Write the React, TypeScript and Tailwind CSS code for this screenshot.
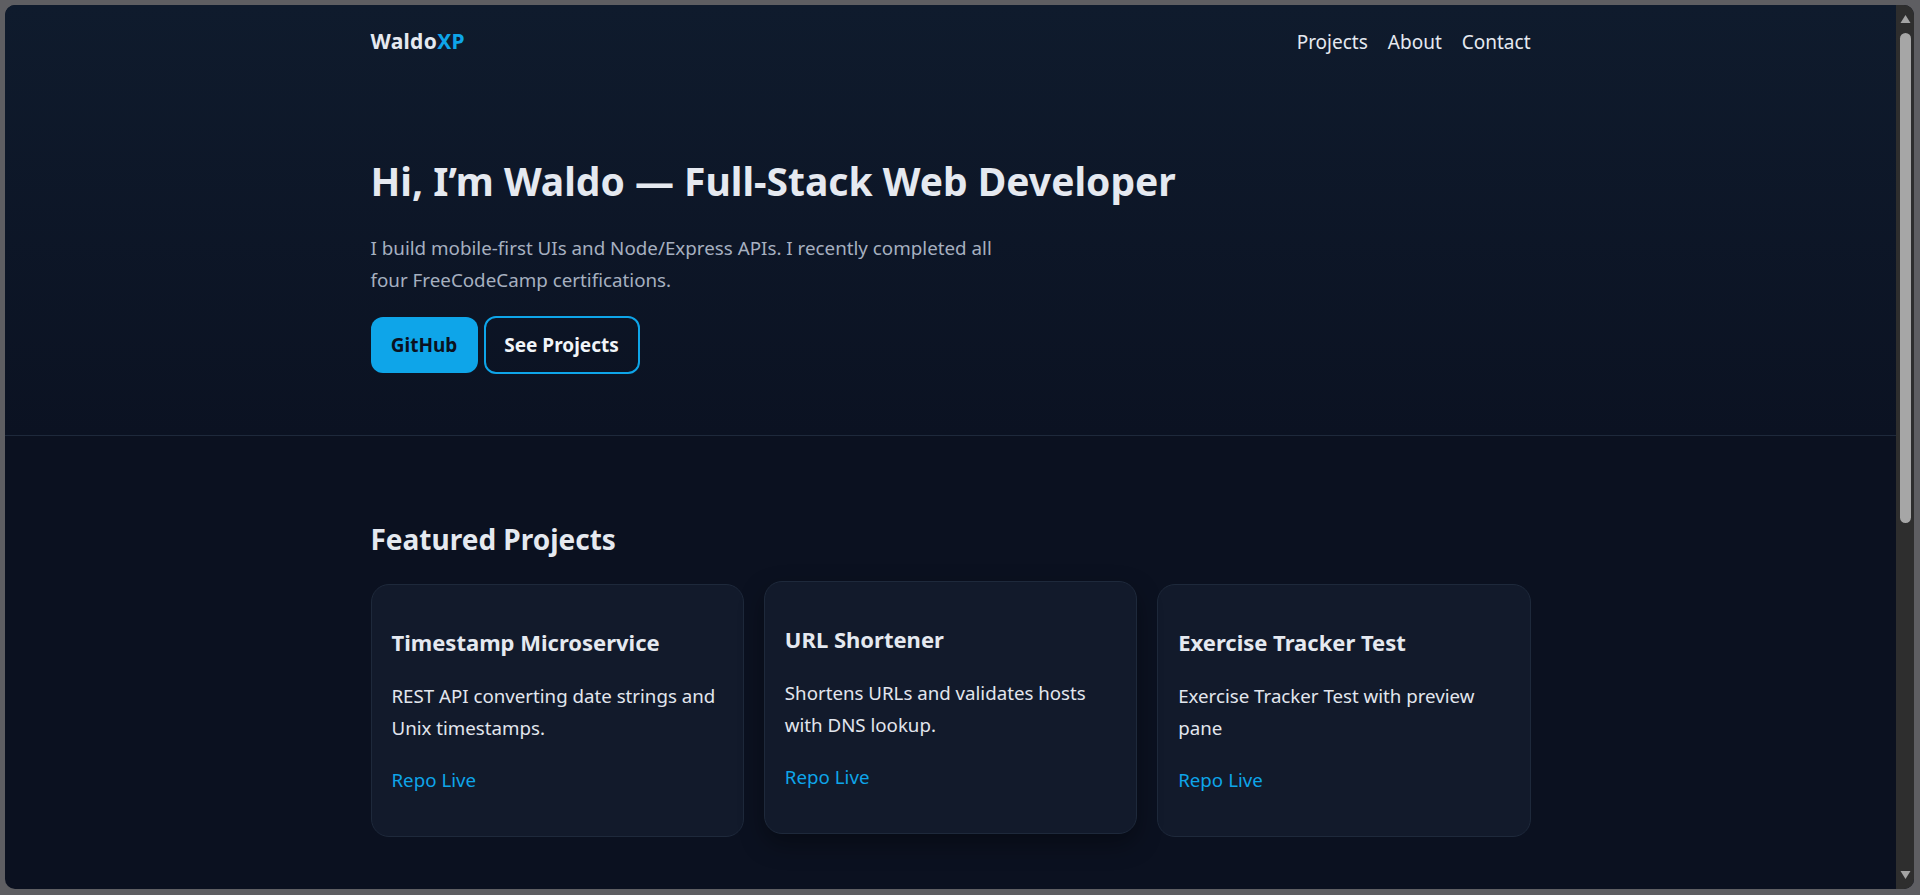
const projects = [
  {
    title: "Timestamp Microservice",
    text: "REST API converting date strings and Unix timestamps.",
  },
  {
    title: "URL Shortener",
    text: "Shortens URLs and validates hosts with DNS lookup.",
    raised: true,
  },
  {
    title: "Exercise Tracker Test",
    text: "Exercise Tracker Test with preview pane",
  },
];

function ProjectCard({ title, text, raised }: { title: string; text: string; raised?: boolean }) {
  return (
    <article
      className={
        raised
          ? "flex flex-col rounded-[18px] border border-[#1e293b] bg-[#121a2b] px-5 pt-[43px] pb-[40px] -translate-y-[3px] shadow-[0_10px_24px_rgba(0,0,0,0.35)]"
          : "flex flex-col rounded-[18px] border border-[#1e293b] bg-[#121a2b] px-5 pt-[43px] pb-[40px]"
      }
    >
      <h3 className="text-[22px] leading-[28px] font-bold text-[#e5e9f0]">{title}</h3>
      <p className="mt-[24px] text-[18.7px] leading-[32px] text-[#e2e6ee]">{text}</p>
      <div className="mt-[20px] flex gap-[5px] text-[18.7px] leading-[32px] text-[#0ea5e9]">
        <a href="#">Repo</a>
        <a href="#">Live</a>
      </div>
    </article>
  );
}

function Scrollbar() {
  return (
    <div className="flex w-[18px] shrink-0 flex-col items-center bg-[#2e2e2e] pt-[9px] pb-[9px]">
      <svg width="11" height="10" viewBox="0 0 11 10">
        <path d="M5.5 1 L10.5 9 L0.5 9 Z" fill="#a3a3a3" />
      </svg>
      <div className="mt-[9px] h-[490px] w-[11px] rounded-full bg-[#a6a6a6]" />
      <div className="flex-1" />
      <svg width="11" height="10" viewBox="0 0 11 10">
        <path d="M0.5 1 L10.5 1 L5.5 9 Z" fill="#a3a3a3" />
      </svg>
    </div>
  );
}

export default function App() {
  return (
    <div
      className="h-[895px] w-full overflow-hidden bg-[#5e5e62] pt-[5px] pr-[6px] pb-[6px] pl-[5px]"
      style={{ fontFamily: '"Segoe UI", "Noto Sans", sans-serif' }}
    >
      <div className="flex h-full overflow-hidden rounded-[10px] bg-[#0b1120]">
        <div className="flex min-w-0 flex-1 flex-col overflow-hidden">
          <header className="border-b border-[#1e293b] bg-gradient-to-b from-[#0f1b2d] to-[#0b1222]">
            <nav className="mx-auto flex h-[74px] w-[1160px] items-center justify-between">
              <a href="#" className="text-[21px] font-bold tracking-[0.3px] text-[#e5e9f0]">
                Waldo<span className="text-[#0ea5e9]">XP</span>
              </a>
              <div className="flex gap-5 text-[19px] text-[#e5e9f0]">
                <a href="#">Projects</a>
                <a href="#">About</a>
                <a href="#">Contact</a>
              </div>
            </nav>
            <section className="mx-auto w-[1160px] pt-[77px] pb-[61px]">
              <h1 className="text-[39px] leading-[50px] font-bold text-[#e5e9f0]">
                Hi, I’m Waldo — Full-Stack Web Developer
              </h1>
              <p className="mt-[26px] max-w-[640px] text-[18.8px] leading-[32px] text-[#a6b0c0]">
                I build mobile-first UIs and Node/Express APIs. I recently completed all four FreeCodeCamp certifications.
              </p>
              <div className="mt-[20px] flex items-center gap-[6px]">
                <a
                  href="#"
                  className="flex h-[56px] w-[107px] items-center justify-center rounded-[12px] bg-[#0ea5e9] text-[19px] font-bold text-[#0b1120]"
                >
                  GitHub
                </a>
                <a
                  href="#"
                  className="flex h-[58px] w-[156px] items-center justify-center rounded-[12px] border-2 border-[#0ea5e9] text-[19px] font-bold text-[#f1f5f9]"
                >
                  See Projects
                </a>
              </div>
            </section>
          </header>
          <main className="mx-auto w-[1160px] pt-[86px]">
            <h2 className="text-[28px] leading-[35px] font-bold text-[#e5e9f0]">Featured Projects</h2>
            <div className="mt-[27px] grid grid-cols-3 gap-[20px]">
              {projects.map((p) => (
                <ProjectCard key={p.title} title={p.title} text={p.text} raised={p.raised} />
              ))}
            </div>
          </main>
        </div>
        <Scrollbar />
      </div>
    </div>
  );
}
